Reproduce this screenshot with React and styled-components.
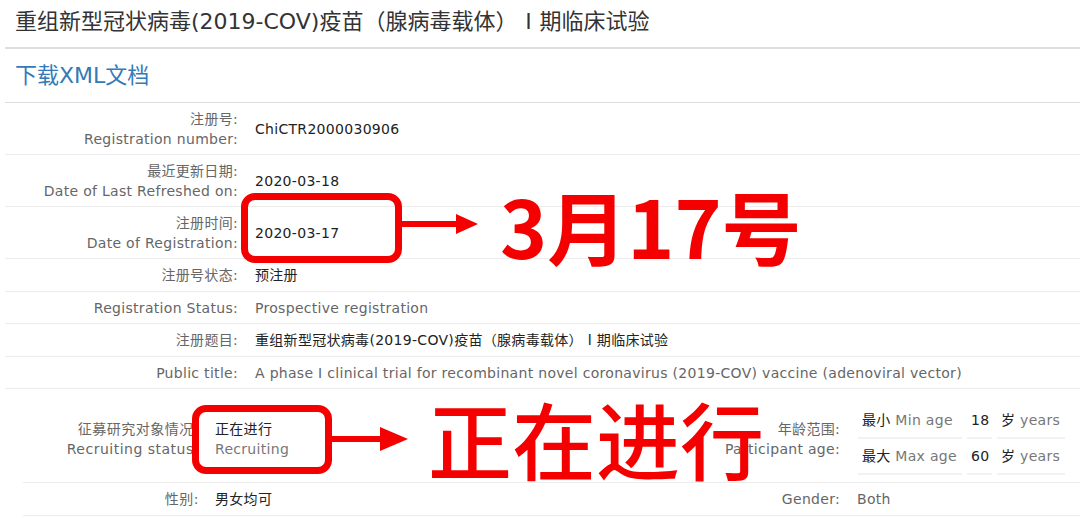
import React from "react";
import styled, { createGlobalStyle } from "styled-components";

const GlobalStyle = createGlobalStyle`
  html, body {
    margin: 0;
    padding: 0;
    background: #fff;
  }
  body {
    font-family: "DejaVu Sans", "Noto Sans CJK SC", sans-serif;
    font-size: 14px;
    letter-spacing: 0.3px;
    color: #333;
  }
`;

const Roman = () => <StyledRoman>Ⅰ</StyledRoman>;

const rows = [
  { zh: "注册号:", en: "Registration number:", value: "ChiCTR2000030906" },
  { zh: "最近更新日期:", en: "Date of Last Refreshed on:", value: "2020-03-18" },
  { zh: "注册时间:", en: "Date of Registration:", value: "2020-03-17" },
  { zh: "注册号状态:", value: "预注册" },
  { en: "Registration Status:", value: "Prospective registration", muted: true },
  {
    zh: "注册题目:",
    value: (
      <>
        重组新型冠状病毒(2019-COV)疫苗（腺病毒载体）
        <Roman />
        期临床试验
      </>
    ),
  },
  {
    en: "Public title:",
    value:
      "A phase I clinical trial for recombinant novel coronavirus (2019-COV) vaccine (adenoviral vector)",
    muted: true,
  },
];

export default function App() {
  return (
    <>
      <GlobalStyle />
      <StyledPage>
        <StyledTitle>
          重组新型冠状病毒(2019-COV)疫苗（腺病毒载体）
          <Roman />
          期临床试验
        </StyledTitle>
        <StyledDownload>
          <a href="#xml">下载XML文档</a>
        </StyledDownload>

        {rows.map((r, i) => (
          <StyledRow key={i} $double={r.zh && r.en}>
            <StyledLabel>
              {r.zh && <div>{r.zh}</div>}
              {r.en && <div>{r.en}</div>}
            </StyledLabel>
            <StyledValue $muted={r.muted}>{r.value}</StyledValue>
          </StyledRow>
        ))}

        <StyledSubTable>
          <StyledSubRow $tall>
            <StyledSubLabel>
              <div>征募研究对象情况:</div>
              <div>Recruiting status:</div>
            </StyledSubLabel>
            <StyledSubValue>
              <div>正在进行</div>
              <StyledMuted>Recruiting</StyledMuted>
            </StyledSubValue>
            <StyledLabel>
              <div>年龄范围:</div>
              <div>Participant age:</div>
            </StyledLabel>
            <StyledAgeGrid>
              <StyledAgeCell>
                最小 <StyledMuted>Min age</StyledMuted>
              </StyledAgeCell>
              <StyledAgeCell>18</StyledAgeCell>
              <StyledAgeCell>
                岁 <StyledMuted>years</StyledMuted>
              </StyledAgeCell>
              <StyledAgeCell>
                最大 <StyledMuted>Max age</StyledMuted>
              </StyledAgeCell>
              <StyledAgeCell>60</StyledAgeCell>
              <StyledAgeCell>
                岁 <StyledMuted>years</StyledMuted>
              </StyledAgeCell>
            </StyledAgeGrid>
          </StyledSubRow>
          <StyledSubRow>
            <StyledSubLabel>性别:</StyledSubLabel>
            <StyledSubValue>男女均可</StyledSubValue>
            <StyledLabel>Gender:</StyledLabel>
            <StyledValue $muted>Both</StyledValue>
          </StyledSubRow>
        </StyledSubTable>

        {/* red annotations drawn over the page */}
        <StyledMark $left={241} $top={193} $width={161} $height={70} />
        <StyledArrow $left={400} $top={212} width="80" height="24" viewBox="0 0 80 24">
          <rect x="0" y="9" width="62" height="6" fill="#f40000" />
          <polygon points="56,2 78,12 56,22" fill="#f40000" />
        </StyledArrow>
        <StyledNote $left={500} $top={172} $size={80} $weight={700}>
          3月17号
        </StyledNote>

        <StyledMark $left={192} $top={405} $width={140} $height={69} />
        <StyledArrow $left={330} $top={427} width="80" height="24" viewBox="0 0 80 24">
          <rect x="0" y="9" width="54" height="6" fill="#f40000" />
          <polygon points="50,0 78,12 50,24" fill="#f40000" />
        </StyledArrow>
        <StyledNote $left={428} $top={383} $size={84} $weight={500}>
          正在进行
        </StyledNote>
      </StyledPage>
    </>
  );
}

const StyledPage = styled.div`
  position: relative;
  width: 1080px;
  height: 521px;
  overflow: hidden;
  padding-left: 5px;
  box-sizing: border-box;
`;

const StyledRoman = styled.span`
  font-family: "Noto Sans CJK SC", sans-serif;
  letter-spacing: 0;
  line-height: 1;
`;

const StyledTitle = styled.h1`
  margin: 0;
  padding: 7px 10px 10px;
  font-size: 22px;
  font-weight: 400;
  line-height: 30px;
  letter-spacing: 0;
  color: #333;
  border-bottom: 2px solid #dedede;
`;

const StyledDownload = styled.div`
  padding: 12px 10px 11px;
  font-size: 22px;
  line-height: 30px;
  letter-spacing: 0;
  border-bottom: 1px solid #dcdcdc;
  a {
    color: #337ab7;
    text-decoration: none;
  }
`;

const StyledRow = styled.div`
  display: grid;
  grid-template-columns: 241px 1fr;
  align-items: center;
  padding: ${(p) => (p.$double ? "6px 0 5px" : "6px 0 5.5px")};
  line-height: 20px;
  border-bottom: 1px solid #ececec;
`;

const StyledLabel = styled.div`
  text-align: right;
  padding-right: 8px;
  color: #666;
  white-space: nowrap;
`;

const StyledValue = styled.div`
  padding-left: 9px;
  color: ${(p) => (p.$muted ? "#666" : "#222")};
  white-space: nowrap;
`;

const StyledMuted = styled.span`
  color: #777;
`;

const StyledSubTable = styled.div`
  margin-left: 18px;
`;

const StyledSubRow = styled.div`
  display: grid;
  grid-template-columns: 180px 1fr 200px 232px;
  align-items: center;
  padding: ${(p) => (p.$tall ? "14px 0 7px" : "6px 0 5.5px")};
  line-height: 20px;
  border-bottom: 1px solid #ececec;
`;

const StyledSubLabel = styled(StyledLabel)`
  padding-right: 4px;
  letter-spacing: 0.5px;
`;

const StyledSubValue = styled(StyledValue)`
  padding-left: 12px;
`;

const StyledAgeGrid = styled.div`
  display: grid;
  grid-template-columns: 104px 25px 68px;
  column-gap: 5px;
  padding-left: 10px;
`;

const StyledAgeCell = styled.div`
  height: 36px;
  line-height: 34px;
  padding-left: 4px;
  box-sizing: border-box;
  white-space: nowrap;
  color: #222;
  border-bottom: 2px solid #f2f2f2;
`;

const StyledMark = styled.div`
  position: absolute;
  left: ${(p) => p.$left}px;
  top: ${(p) => p.$top}px;
  width: ${(p) => p.$width}px;
  height: ${(p) => p.$height}px;
  box-sizing: border-box;
  border: 7px solid #f40000;
  border-radius: 14px;
`;

const StyledArrow = styled.svg`
  position: absolute;
  left: ${(p) => p.$left}px;
  top: ${(p) => p.$top}px;
`;

const StyledNote = styled.div`
  position: absolute;
  left: ${(p) => p.$left}px;
  top: ${(p) => p.$top}px;
  font-family: "Noto Sans CJK SC", sans-serif;
  font-size: ${(p) => p.$size}px;
  font-weight: ${(p) => p.$weight};
  line-height: 1.3;
  letter-spacing: 0;
  color: #f40000;
  white-space: nowrap;
`;
